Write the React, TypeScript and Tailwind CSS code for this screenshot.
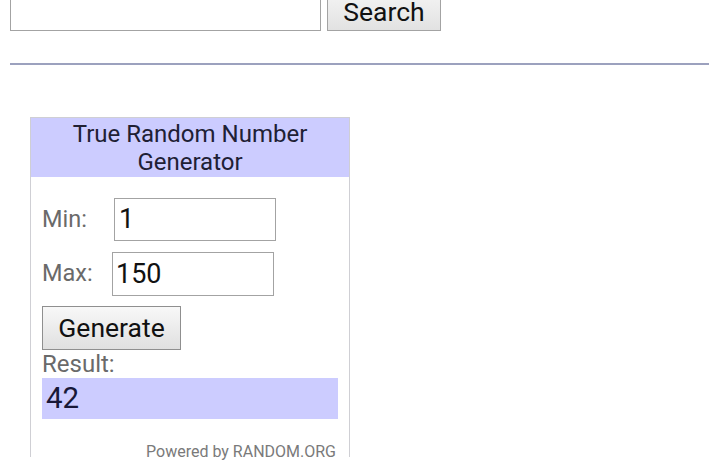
import React from "react";

const font = { fontFamily: "Roboto, 'Liberation Sans', sans-serif" };

export default function App() {
  return (
    <div className="relative h-[467px] w-[719px] overflow-hidden bg-white" style={font}>
      {/* search bar */}
      <div className="flex items-end px-[10px] mt-[-13px] h-[44px]">
        <div className="h-[44px] w-[311px] border border-[#a3a3a3] bg-white" />
        <button className="ml-[6px] h-[44px] w-[114px] border border-[#a3a3a3] bg-gradient-to-b from-[#f6f6f6] to-[#e2e2e2] text-[26.5px] leading-[30px] text-[#111] pt-[6px]">
          Search
        </button>
      </div>

      <div className="mx-[10px] mt-[32px] h-[2px] bg-[#9ca1be]" />

      {/* random number widget */}
      <div className="ml-[30px] mt-[52px] h-[340px] w-[320px] border-x border-t border-[#cfcfd4]">
        <div className="h-[59px] bg-[#ccccff] pt-[2px] text-center text-[24px] leading-[28px] text-[#202034]">
          True Random Number
          <br />
          Generator
        </div>

        <div className="px-[11px]">
          <div className="mt-[21px] flex items-center">
            <span className="w-[72px] text-[23.5px] text-[#6a6a6a]">Min:</span>
            <div className="flex h-[43px] w-[162px] items-center border border-[#a3a3a3] pl-[4px] text-[27px] text-[#111]">
              1
            </div>
          </div>
          <div className="mt-[11px] flex items-center">
            <span className="w-[70px] text-[23.5px] text-[#6a6a6a]">Max:</span>
            <div className="flex h-[44px] w-[162px] items-center border border-[#a3a3a3] pl-[3px] text-[27px] text-[#111]">
              150
            </div>
          </div>
          <button className="mt-[10px] h-[44px] w-[139px] border border-[#8f8f8f] bg-gradient-to-b from-[#f8f8f8] to-[#e0e0e0] text-[26.5px] text-[#111]">
            Generate
          </button>
          <div className="mt-[0px] text-[24px] leading-[28px] text-[#6a6a6a]">Result:</div>
          <div className="flex h-[41px] w-[296px] items-center bg-[#ccccff] pl-[4px] text-[29.5px] text-[#181838]">
            42
          </div>
          <div className="mt-[21px] pr-[2px] text-right text-[16px] leading-[24px] text-[#7a7a7a]">
            Powered by RANDOM.ORG
          </div>
        </div>
      </div>
    </div>
  );
}
